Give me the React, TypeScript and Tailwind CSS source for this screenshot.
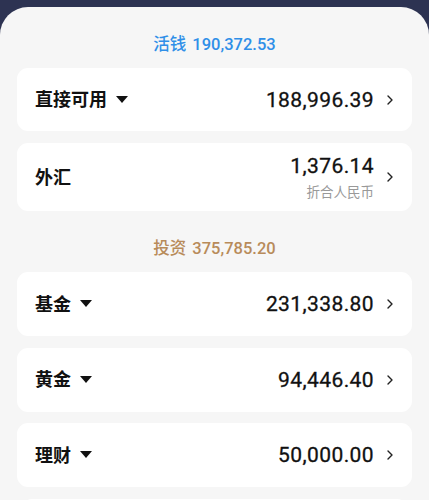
import React from 'react';

type Row = {
    label: string;
    amount: string;
    dropdown?: boolean;
    note?: string;
    h: string;
};

const Chevron = () => (
    <svg width="8" height="12" viewBox="0 0 8 12" className="ml-[12px] mr-[18px] shrink-0">
        <polyline points="2,2 6,6 2,10" fill="none" stroke="#222" strokeWidth="1.4" strokeLinecap="round" strokeLinejoin="round" />
    </svg>
);

const Caret = () => (
    <svg width="12" height="8" viewBox="0 0 12 8" className="ml-[9px] shrink-0">
        <polygon points="0,0 12,0 6,7" fill="#111" />
    </svg>
);

const AssetCard = ({ row }: { row: Row }) => (
    <div className={`flex items-center bg-white rounded-[11px] ${row.h}`}>
        <div className="flex items-center pl-[18px] flex-1">
            <span className="text-[18px] font-bold text-[#111]">{row.label}</span>
            {row.dropdown && <Caret />}
        </div>
        <div className="flex flex-col items-end">
            <span className="text-[21px] font-normal text-[#111] leading-[26px] tracking-[0.4px] [-webkit-text-stroke:0.3px_#111]">{row.amount}</span>
            {row.note && <span className="text-[13.5px] text-[#999] leading-[18px] mt-[4px]">{row.note}</span>}
        </div>
        <Chevron />
    </div>
);

const SectionTitle = ({ name, total, color }: { name: string; total: string; color: string }) => (
    <div className={`h-[61px] pt-[16px] flex items-center justify-center gap-[6px] text-[16.5px] font-medium ${color}`}>
        <span>{name}</span>
        <span>{total}</span>
    </div>
);

const cash: Row[] = [
    { label: '直接可用', amount: '188,996.39', dropdown: true, h: 'h-[63px]' },
    { label: '外汇', amount: '1,376.14', note: '折合人民币', h: 'h-[68px]' },
];

const invest: Row[] = [
    { label: '基金', amount: '231,338.80', dropdown: true, h: 'h-[64px]' },
    { label: '黄金', amount: '94,446.40', dropdown: true, h: 'h-[64px]' },
    { label: '理财', amount: '50,000.00', dropdown: true, h: 'h-[64px]' },
];

export default function App() {
    return (
        <div
            className="bg-[#2d3352] pt-[7px] h-[500px] overflow-hidden"
            style={{ fontFamily: 'Roboto, "Noto Sans CJK SC", sans-serif' }}
        >
            <div className="bg-[#f6f6f6] rounded-t-[28px] px-[17px] pb-[20px] min-h-[493px]">
                <SectionTitle name="活钱" total="190,372.53" color="text-[#2f8fe8]" />
                <div className="flex flex-col gap-[12px]">
                    {cash.map(r => <AssetCard key={r.label} row={r} />)}
                </div>
                <SectionTitle name="投资" total="375,785.20" color="text-[#b88b5a]" />
                <div className="flex flex-col gap-[11.5px]">
                    {invest.map(r => <AssetCard key={r.label} row={r} />)}
                    {/* next card, only its top edge shows */}
                    <div className="h-[64px] bg-white rounded-[11px] mx-[4px]" />
                </div>
            </div>
        </div>
    );
}
